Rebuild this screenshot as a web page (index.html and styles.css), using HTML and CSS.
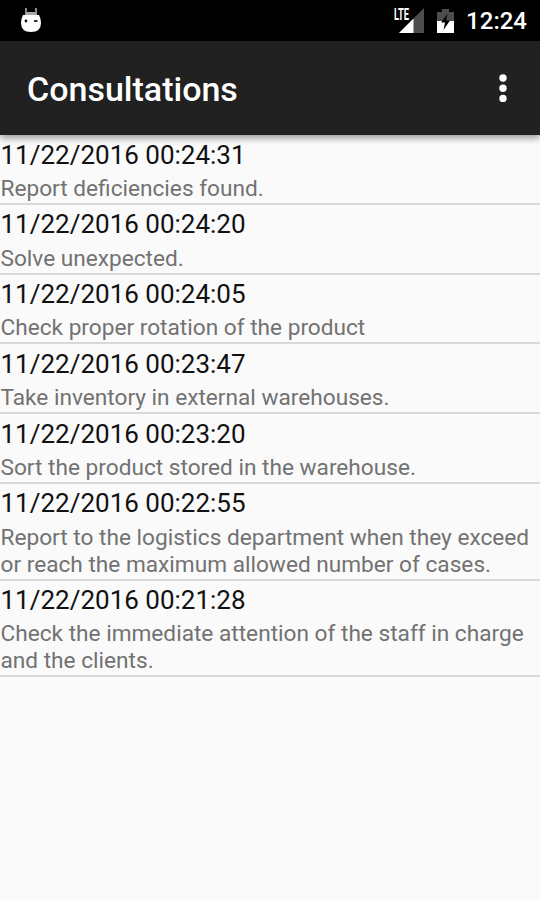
FILE: index.html
```html
<!DOCTYPE html>
<html lang="en">
<head>
  <meta charset="UTF-8" />
  <meta name="viewport" content="width=device-width, initial-scale=1.0" />
  <title>Consultations</title>
  <link rel="stylesheet" href="styles.css">
</head>
<body>
  <!-- Status bar -->
  <div class="status-bar">
    <svg class="debug-icon" width="22" height="26" viewBox="0 0 22 26">
      <path d="M6 1v6M16 1v6" stroke="#8a8a8a" stroke-width="2" fill="none" />
      <path d="M5 10V7l2-2h8l2 2v3z" fill="#aaa" />
      <path d="M3 8h16q2 4 2 8 0 9-10 9T1 16q0-4 2-8z" fill="#fff" />
      <circle cx="6" cy="14" r="1.400" fill="#111" />
      <path d="M14 14h3.500" stroke="#333" stroke-width="2" />
    </svg>
    <div class="status-right">
      <div class="signal">
        <span class="lte">LTE</span>
        <svg width="26" height="25" viewBox="0 0 26 25">
          <path d="M26 0v25H1z" fill="#4d4d4d" />
          <path d="M15.500 10.500V25H1z" fill="#fff" />
        </svg>
      </div>
      <svg class="battery" width="17" height="26" viewBox="0 0 17 26">
        <path d="M5 1h7v3h5v9H0V4h5z" fill="#4d4d4d" />
        <path d="M0 13h17v12H0z" fill="#fff" />
        <path d="M10.500 6L4 14.500h4L6.500 22 13 12.500H9z" fill="#000" />
      </svg>
      <span class="clock">12:24</span>
    </div>
  </div>

  <!-- Toolbar -->
  <header class="toolbar">
    <h1>Consultations</h1>
    <button class="menu" aria-label="More options">
      <svg width="10" height="30" viewBox="0 0 10 30">
        <circle cx="5" cy="5" r="3.700" />
        <circle cx="5" cy="15.200" r="3.700" />
        <circle cx="5" cy="25.400" r="3.700" />
      </svg>
    </button>
  </header>

  <ul class="list">
    <li>
      <div class="date">11/22/2016 00:24:31</div>
      <p>Report deficiencies found.</p>
    </li>
    <li>
      <div class="date">11/22/2016 00:24:20</div>
      <p>Solve unexpected.</p>
    </li>
    <li>
      <div class="date">11/22/2016 00:24:05</div>
      <p>Check proper rotation of the product</p>
    </li>
    <li>
      <div class="date">11/22/2016 00:23:47</div>
      <p>Take inventory in external warehouses.</p>
    </li>
    <li>
      <div class="date">11/22/2016 00:23:20</div>
      <p>Sort the product stored in the warehouse.</p>
    </li>
    <li>
      <div class="date">11/22/2016 00:22:55</div>
      <p>Report to the logistics department when they exceed<br>or reach the maximum allowed number of cases.</p>
    </li>
    <li>
      <div class="date">11/22/2016 00:21:28</div>
      <p>Check the immediate attention of the staff in charge<br>and the clients.</p>
    </li>
  </ul>
</body>
</html>
```
FILE: styles.css
```css
* {
  box-sizing: border-box;
}
body {
  background: #fafafa;
  font-family: Roboto, sans-serif;
  margin: 0;
  min-height: 100vh;
}
/* Status bar */
.status-bar {
  display: flex;
  justify-content: space-between;
  align-items: center;
  height: 41px;
  padding: 0 13px 0 20px;
  background: #000;
  color: #fff;
}
.debug-icon {
  margin-bottom: 2px;
}
.status-right {
  display: flex;
  align-items: center;
}
.signal {
  display: flex;
  position: relative;
  padding-left: 5px;
}
.lte {
  position: absolute;
  left: 1px;
  top: -1px;
  font-size: 16px;
  line-height: 15px;
  font-weight: 700;
  transform: scaleX(0.58);
  transform-origin: left;
}
.battery {
  margin: 0 12px 0 13px;
}
.clock {
  font-size: 24px;
  font-weight: 500;
  line-height: 40px;
  padding-top: 1px;
}
/* Toolbar */
.toolbar {
  display: flex;
  justify-content: space-between;
  align-items: center;
  position: relative;
  height: 94px;
  padding: 0 32px 0 27px;
  background: #212121;
  color: #fff;
  box-shadow: 0 3px 7px rgba(0, 0, 0, 0.4);
}
.toolbar h1 {
  margin: 1px 0 0;
  font-size: 34px;
  font-weight: 500;
}
.menu {
  display: flex;
  padding: 0;
  border: none;
  background: none;
}
.menu svg {
  fill: #fff;
}
/* Entries */
.list {
  list-style: none;
  margin: 0;
  padding: 0;
}
.list li {
  height: 69.75px;
  padding: 2.6px 0 0 0.5px;
  border-bottom: 2px solid #d9d9d9;
}
.list li:nth-child(n+6) {
  height: 96.75px;
}
.date {
  font-size: 26px;
  line-height: 34px;
  color: #111;
}
.list p {
  margin: 3.4px 0 0;
  font-size: 22.65px;
  line-height: 27px;
  color: #727272;
  white-space: nowrap;
}
```
